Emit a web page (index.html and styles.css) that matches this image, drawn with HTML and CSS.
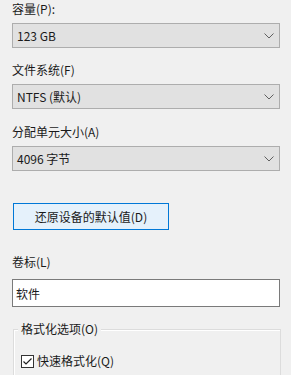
FILE: index.html
```html
<!DOCTYPE html>
<html lang="zh-CN">
<head>
<meta charset="utf-8">
<title>格式化</title>
<link rel="stylesheet" href="styles.css">
</head>
<body>
<div class="panel">
  <div class="label first">容量(P):</div>
  <div class="combo"><span>123 GB</span><svg class="chev" width="10" height="6" viewBox="0 0 10 6"><path d="M0.5 0.5 L5 5 L9.5 0.5" fill="none" stroke="#606060" stroke-width="1"/></svg></div>
  <div class="label l2">文件系统(F)</div>
  <div class="combo"><span>NTFS (默认)</span><svg class="chev" width="10" height="6" viewBox="0 0 10 6"><path d="M0.5 0.5 L5 5 L9.5 0.5" fill="none" stroke="#606060" stroke-width="1"/></svg></div>
  <div class="label l3">分配单元大小(A)</div>
  <div class="combo"><span>4096 字节</span><svg class="chev" width="10" height="6" viewBox="0 0 10 6"><path d="M0.5 0.5 L5 5 L9.5 0.5" fill="none" stroke="#606060" stroke-width="1"/></svg></div>
  <div class="button">还原设备的默认值(D)</div>
  <div class="label l4">卷标(L)</div>
  <div class="textbox">软件</div>
  <div class="group">
    <div class="legend">格式化选项(O)</div>
    <div class="check-row">
      <span class="checkbox"><svg width="11" height="11" viewBox="0 0 11 11"><path d="M1.5 5.5 L4 8 L9.5 2.5" fill="none" stroke="#222" stroke-width="1.2"/></svg></span>
      <span class="check-label">快速格式化(Q)</span>
    </div>
  </div>
</div>
</body>
</html>
```

FILE: styles.css
```css
html, body {
  margin: 0;
  padding: 0;
  background: #f0f0f0;
}
body {
  font-family: "Noto Sans CJK SC", "Noto Sans", sans-serif;
  font-size: 12px;
  color: #1a1a1a;
  overflow: hidden;
}
.panel {
  padding: 1px 11px 0 12px;
  width: 268px;
}
.label {
  height: 16px;
  line-height: 16px;
  white-space: nowrap;
}
.label.first { margin-top: 0; }
.label.l2 { margin-top: 14px; }
.label.l3 { margin-top: 15px; }
.label.l4 { margin-top: 24px; }
.combo {
  box-sizing: border-box;
  margin-top: 6px;
  height: 25px;
  border: 1px solid #adadad;
  background: #e1e1e1;
  display: flex;
  align-items: center;
  justify-content: space-between;
  padding: 0 5px 0 4px;
}
.combo span {
  line-height: 16px;
}
.chev {
  display: block;
  margin-top: 1px;
}
.button {
  box-sizing: border-box;
  margin: 32px 0 0 1px;
  width: 156px;
  height: 27px;
  border: 1px solid #0078d7;
  background: #e5f1fb;
  display: flex;
  align-items: center;
  justify-content: center;
}
.textbox {
  box-sizing: border-box;
  margin-top: 9px;
  height: 28px;
  border: 1px solid #7a7a7a;
  background: #ffffff;
  display: flex;
  align-items: center;
  padding-left: 3px;
}
.group {
  position: relative;
  margin: 22px 0 0 1px;
  width: 266px;
  height: 60px;
  border: 1px solid #dcdcdc;
  box-shadow: inset 1px 1px 0 #ffffff;
}
.legend {
  position: absolute;
  left: 4px;
  top: -9px;
  padding: 0 3px;
  background: #f0f0f0;
  line-height: 16px;
}
.check-row {
  display: flex;
  align-items: center;
  margin: 23px 0 0 7px;
  gap: 3px;
}
.checkbox {
  box-sizing: border-box;
  width: 13px;
  height: 13px;
  border: 1px solid #333333;
  background: #ffffff;
  display: flex;
  align-items: center;
  justify-content: center;
}
.checkbox svg { display: block; }
.check-label { line-height: 16px; }
```
